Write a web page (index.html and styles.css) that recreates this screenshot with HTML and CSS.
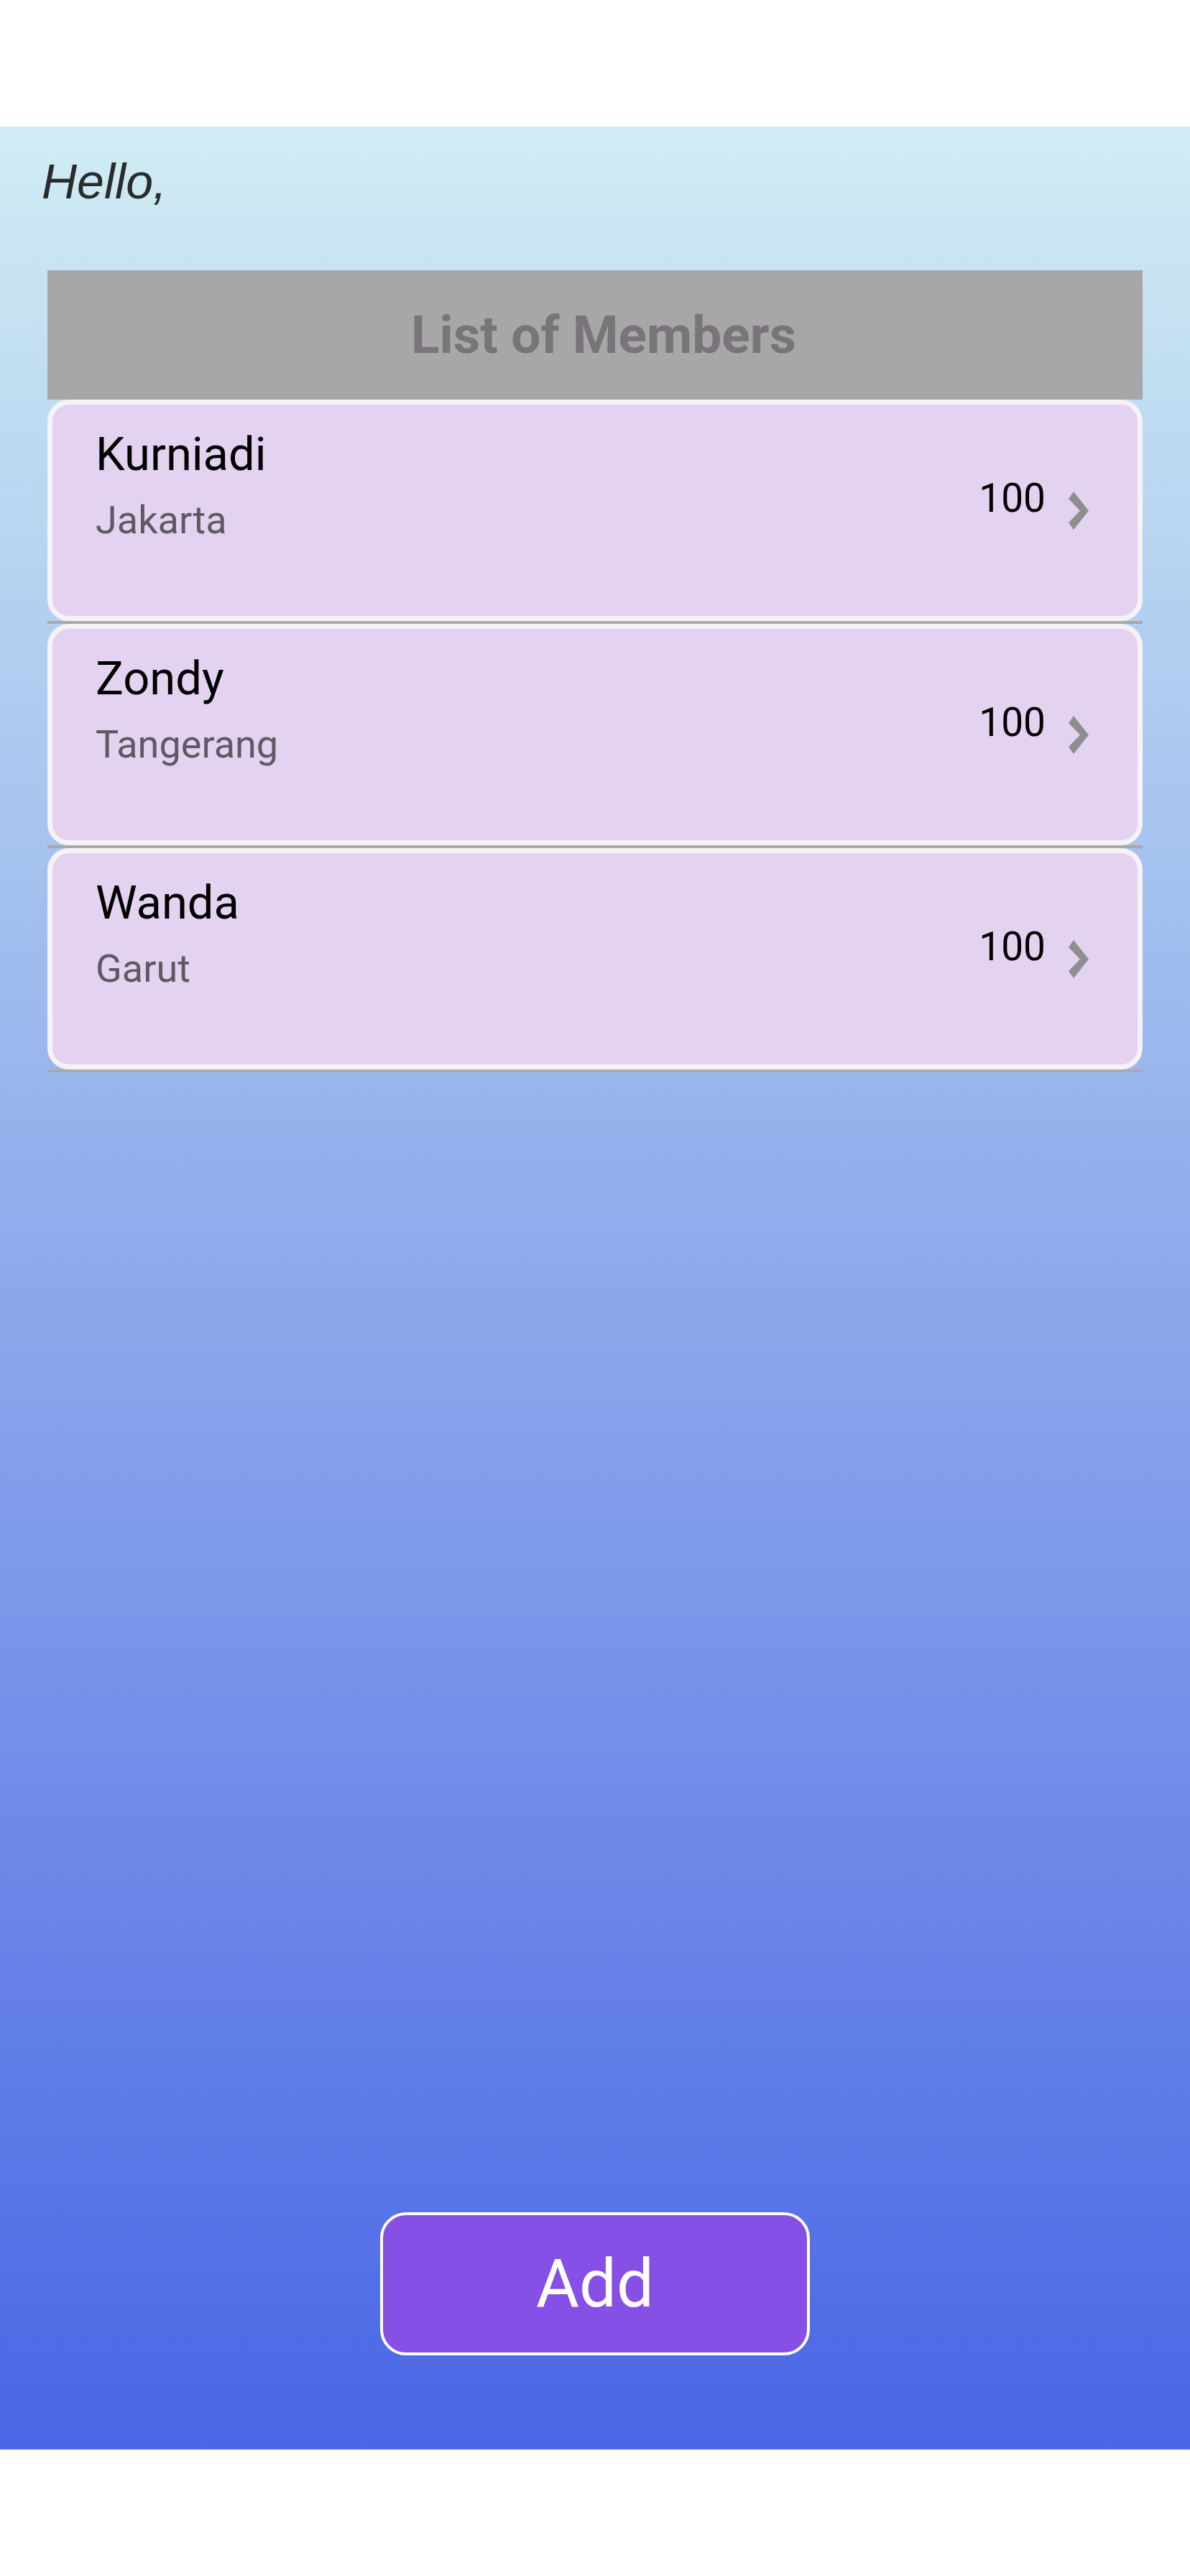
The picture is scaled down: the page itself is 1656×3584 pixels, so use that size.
FILE: index.html
```html
<!DOCTYPE html>
<html lang="en">
<head>
<meta charset="utf-8">
<title>Members</title>
<link rel="stylesheet" href="styles.css">
</head>
<body>
<div class="screen">
  <p class="greeting">Hello,</p>
  <section class="members">
    <header class="members-header"><h1 class="members-title">List of Members</h1></header>
    <ul class="member-list">
      <li class="member-item">
        <div class="member-card">
          <div class="member-info">
            <span class="member-name">Kurniadi</span>
            <span class="member-city">Jakarta</span>
          </div>
          <span class="member-score">100</span>
          <svg class="chevron" viewBox="0 0 28 53"><polygon points="7,0 28,26.5 7,53 0,43 16,26.5 0,10"/></svg>
        </div>
      </li>
      <li class="member-item">
        <div class="member-card">
          <div class="member-info">
            <span class="member-name">Zondy</span>
            <span class="member-city">Tangerang</span>
          </div>
          <span class="member-score">100</span>
          <svg class="chevron" viewBox="0 0 28 53"><polygon points="7,0 28,26.5 7,53 0,43 16,26.5 0,10"/></svg>
        </div>
      </li>
      <li class="member-item">
        <div class="member-card">
          <div class="member-info">
            <span class="member-name">Wanda</span>
            <span class="member-city">Garut</span>
          </div>
          <span class="member-score">100</span>
          <svg class="chevron" viewBox="0 0 28 53"><polygon points="7,0 28,26.5 7,53 0,43 16,26.5 0,10"/></svg>
        </div>
      </li>
    </ul>
  </section>
  <div class="actions">
    <button class="add-btn" type="button">Add</button>
  </div>
</div>
</body>
</html>
```
FILE: styles.css
```css
html, body {
  margin: 0;
  background: #ffffff;
}

body {
  padding: 176px 0;
  font-family: Roboto, "Noto Sans", sans-serif;
}

.screen {
  height: 3232px;
  box-sizing: border-box;
  padding-top: 36px;
  display: flex;
  flex-direction: column;
  background: linear-gradient(180deg, #d0ecf3 0%, #4a66e5 100%);
}

.greeting {
  margin: 0 0 0 58px;
  font-family: "Liberation Sans", Arial, sans-serif;
  font-style: italic;
  font-size: 68px;
  line-height: 80px;
  color: #2b2b2b;
}

.members {
  margin: 84px 66px 0;
}

.members-header {
  height: 180px;
  display: flex;
  align-items: center;
  justify-content: center;
  background: #a7a7a7;
}

.members-title {
  margin: 0;
  padding-left: 24px;
  font-family: Roboto, sans-serif;
  font-weight: 700;
  font-size: 73px;
  line-height: 92px;
  color: #79737a;
}

.member-list {
  list-style: none;
  margin: 0;
  padding: 0;
}

.member-item {
  border-bottom: 4px solid #a9a9a9;
}

.member-card {
  height: 308px;
  box-sizing: border-box;
  border: 7px solid #f7f1f8;
  border-radius: 30px;
  background: #e3d3f0;
  display: flex;
  align-items: center;
  padding: 0 68px 0 60px;
}

.member-info {
  flex: 1;
  align-self: flex-start;
  margin-top: 31px;
  display: flex;
  flex-direction: column;
}

.member-name {
  font-size: 65px;
  line-height: 76px;
  color: #000000;
}

.member-city {
  margin-top: 22px;
  font-size: 54px;
  line-height: 64px;
  color: #5e5a62;
}

.member-score {
  font-size: 55px;
  line-height: 64px;
  color: #000000;
  margin-bottom: 34px;
}

.chevron {
  width: 28px;
  height: 53px;
  margin-left: 32px;
  fill: #8e8e8e;
}

.actions {
  margin-top: auto;
  padding-bottom: 131px;
  display: flex;
  justify-content: center;
}

.add-btn {
  width: 598px;
  height: 199px;
  box-sizing: border-box;
  padding: 0;
  border: 4px solid #ffffff;
  border-radius: 36px;
  background: #8650e6;
  color: #ffffff;
  font-family: Roboto, sans-serif;
  font-size: 92px;
  line-height: 1;
}
```
